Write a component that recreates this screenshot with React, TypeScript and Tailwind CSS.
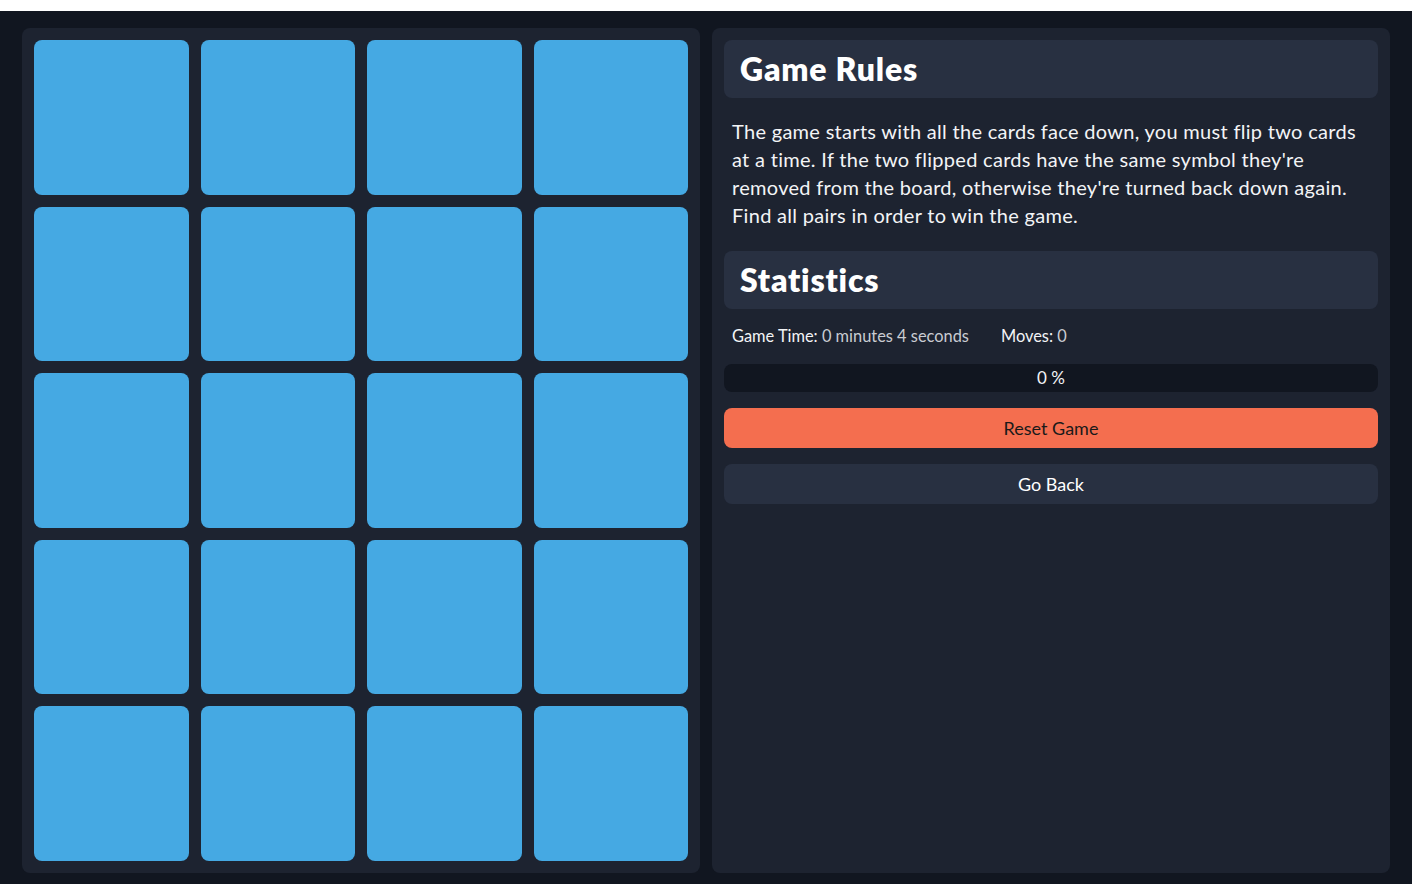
const cards = Array.from({ length: 20 }, (_, i) => i)

function SectionTitle({ children }: { children: string }) {
  return (
    <div className="h-[58px] flex items-center px-4 rounded-lg bg-[#283041]">
      <h2 className="text-[32px] font-extrabold text-white tracking-[0.8px]">{children}</h2>
    </div>
  )
}

export default function App() {
  return (
    <div className="min-h-screen bg-white font-['Lato',sans-serif]">
      <div className="h-[11px] bg-white" />
      <main className="bg-[#111620] px-[22px] pt-[17px] pb-3 grid grid-cols-2 gap-3">
        <section className="bg-[#1d2330] rounded-lg p-3 grid grid-cols-4 gap-3">
          {cards.map((card) => (
            <button key={card} className="aspect-square rounded-lg bg-[#45a9e3]" />
          ))}
        </section>

        <section className="bg-[#1d2330] rounded-lg p-3 flex flex-col text-[#f3f4f6]">
          <SectionTitle>Game Rules</SectionTitle>
          <p className="px-2 pt-[19px] pb-[22px] max-w-[644px] text-[20px] tracking-[0.3px] leading-7">
            The game starts with all the cards face down, you must flip two cards at a time. If
            the two flipped cards have the same symbol they're removed from the board, otherwise
            they're turned back down again. Find all pairs in order to win the game.
          </p>

          <SectionTitle>Statistics</SectionTitle>
          <div className="px-2 pt-[15px] pb-4 flex gap-8 text-[16.4px] leading-6">
            <span>
              Game Time: <span className="text-[#c9ccd2]">0 minutes 4 seconds</span>
            </span>
            <span>
              Moves: <span className="text-[#c9ccd2]">0</span>
            </span>
          </div>

          <div className="h-7 rounded-lg bg-[#111620] flex items-center justify-center text-[17px]">
            0 %
          </div>
          <button className="mt-4 h-10 rounded-lg bg-[#f46e4f] text-[#1a1a1a] text-lg">
            Reset Game
          </button>
          <button className="mt-4 h-10 rounded-lg bg-[#283041] text-white text-lg">
            Go Back
          </button>
        </section>
      </main>
    </div>
  )
}
